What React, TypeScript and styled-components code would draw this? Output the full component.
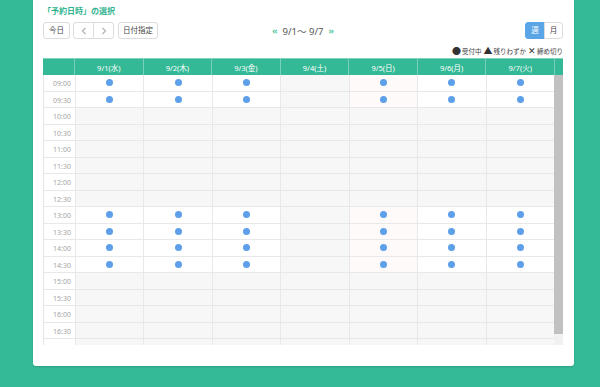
import React from 'react'
import styled, { createGlobalStyle } from 'styled-components'

const GlobalStyle = createGlobalStyle`
  html, body {
    margin: 0;
    padding: 0;
    background: #35ba98;
    font-family: "Noto Sans", "Noto Sans CJK JP", sans-serif;
  }
  * { box-sizing: border-box; }
`

const Page = styled.div`
  width: 600px;
  height: 387px;
  padding-left: 33px;
  overflow: hidden;
`

const Panel = styled.div`
  width: 541px;
  height: 366px;
  background: #fff;
  border-radius: 0 0 3px 3px;
  box-shadow: 0 1px 2px rgba(0, 0, 0, 0.15);
  padding: 5px 11px 0 10px;
  display: flex;
  flex-direction: column;
`

const Title = styled.div`
  font-size: 8px;
  line-height: 12px;
  font-weight: 700;
  color: #2fb48f;
  height: 12px;
`

const Toolbar = styled.div`
  margin-top: 5px;
  height: 17px;
  display: grid;
  grid-template-columns: 1fr auto 1fr;
  align-items: center;
`

const ButtonGroup = styled.div<{ $end?: boolean }>`
  display: flex;
  align-items: center;
  gap: 3px;
  justify-content: ${(p) => (p.$end ? 'flex-end' : 'flex-start')};
`

const Joined = styled.div`
  display: flex;
`

const Btn = styled.button<{ $w: number; $active?: boolean; $pos?: 'left' | 'right' }>`
  width: ${(p) => p.$w}px;
  height: 17px;
  padding: 0;
  border: 1px solid ${(p) => (p.$active ? '#5aa5e6' : '#dcdcdc')};
  background: ${(p) => (p.$active ? '#5aa5e6' : '#fff')};
  color: ${(p) => (p.$active ? '#fff' : '#444')};
  font-family: inherit;
  font-size: 7.5px;
  line-height: 15px;
  display: flex;
  align-items: center;
  justify-content: center;
  border-radius: ${(p) =>
    p.$pos === 'left' ? '3px 0 0 3px' : p.$pos === 'right' ? '0 3px 3px 0' : '3px'};
  & + & {
    margin-left: -1px;
  }
`

const Nav = styled.div`
  display: flex;
  align-items: center;
  gap: 5px;
  font-size: 9.5px;
  color: #555;
`

const NavArrow = styled.span`
  color: #5ccaa8;
  font-size: 9px;
  font-weight: 700;
`

const Legend = styled.div`
  margin-top: 7px;
  height: 9px;
  display: flex;
  justify-content: flex-end;
  align-items: center;
  gap: 2px;
  font-size: 6.5px;
  color: #444;
`

const LegendItem = styled.span`
  display: flex;
  align-items: center;
  gap: 1px;
`

const Mark = styled.span`
  font-size: 9px;
  color: #333;
  line-height: 9px;
`

const cols = '31px repeat(7, 1fr)'

const HeaderRow = styled.div`
  margin-top: 3px;
  display: grid;
  grid-template-columns: ${cols} 9px;
  height: 17px;
  background: #33b996;
  border-top: 1px solid #7fd3bd;
`

const HeadCell = styled.div`
  color: #fff;
  font-size: 7.5px;
  padding-top: 1px;
  display: flex;
  align-items: center;
  justify-content: center;
  border-left: 1px solid rgba(255, 255, 255, 0.35);
  &:first-child {
    border-left: none;
  }
`

const Body = styled.div`
  height: 270px;
  display: flex;
`

const Rows = styled.div`
  flex: 1;
  overflow: hidden;
  border-left: 1px solid #e6e6e6;
`

const ScrollTrack = styled.div`
  width: 9px;
  background: #f1f1f1;
`

const ScrollThumb = styled.div`
  height: 259px;
  background: #c1c1c1;
`

const Row = styled.div`
  display: grid;
  grid-template-columns: ${cols};
  height: 16.5px;
  border-bottom: 1px solid #e8e8e8;
`

const TimeCell = styled.div`
  background: #fff;
  color: #a5a5a5;
  font-size: 7px;
  display: flex;
  align-items: center;
  justify-content: flex-end;
  padding: 2px 4px 0 0;
`

const DayCell = styled.div<{ $bg: string }>`
  background: ${(p) => p.$bg};
  border-left: 1px solid #e8e8e8;
  display: flex;
  align-items: center;
  justify-content: center;
`

const Dot = styled.span`
  width: 7px;
  height: 7px;
  border-radius: 50%;
  background: #5d9fe9;
`

const days = ['9/1(水)', '9/2(木)', '9/3(金)', '9/4(土)', '9/5(日)', '9/6(月)', '9/7(火)']
const times = [
  '09:00', '09:30', '10:00', '10:30', '11:00', '11:30', '12:00', '12:30',
  '13:00', '13:30', '14:00', '14:30', '15:00', '15:30', '16:00', '16:30', '',
]
const openTimes = ['09:00', '09:30', '13:00', '13:30', '14:00', '14:30']

const cellBg = (open: boolean, day: number) => {
  if (!open || day === 3) return '#f7f7f7'
  if (day === 4) return '#fffafa'
  return '#fff'
}

const Chevron = ({ dir }: { dir: 'l' | 'r' }) => (
  <svg width="6" height="8" viewBox="0 0 6 8">
    <path
      d={dir === 'l' ? 'M4.5 1 L1.5 4 L4.5 7' : 'M1.5 1 L4.5 4 L1.5 7'}
      fill="none"
      stroke="#b5b5b5"
      strokeWidth="1.3"
    />
  </svg>
)

export default function App() {
  return (
    <>
      <GlobalStyle />
      <Page>
        <Panel>
          <Title>「予約日時」の選択</Title>
          <Toolbar>
            <ButtonGroup>
              <Btn $w={27}>今日</Btn>
              <Joined>
                <Btn $w={21} $pos="left">
                  <Chevron dir="l" />
                </Btn>
                <Btn $w={21} $pos="right">
                  <Chevron dir="r" />
                </Btn>
              </Joined>
              <Btn $w={40} style={{ marginLeft: 1 }}>日付指定</Btn>
            </ButtonGroup>
            <Nav>
              <NavArrow>«</NavArrow>
              <span>9/1〜 9/7</span>
              <NavArrow>»</NavArrow>
            </Nav>
            <ButtonGroup $end>
              <Joined>
                <Btn $w={20} $active $pos="left">週</Btn>
                <Btn $w={19} $pos="right">月</Btn>
              </Joined>
            </ButtonGroup>
          </Toolbar>
          <Legend>
            <LegendItem><Mark>●</Mark>受付中</LegendItem>
            <LegendItem><Mark>▲</Mark>残りわずか</LegendItem>
            <LegendItem><Mark>✕</Mark>締め切り</LegendItem>
          </Legend>
          <HeaderRow>
            <HeadCell />
            {days.map((d) => (
              <HeadCell key={d}>{d}</HeadCell>
            ))}
            <HeadCell />
          </HeaderRow>
          <Body>
            <Rows>
              {times.map((t, r) => {
                const open = openTimes.includes(t)
                return (
                  <Row key={r}>
                    <TimeCell>{t}</TimeCell>
                    {days.map((d, i) => (
                      <DayCell key={d} $bg={cellBg(open, i)}>
                        {open && i !== 3 && <Dot />}
                      </DayCell>
                    ))}
                  </Row>
                )
              })}
            </Rows>
            <ScrollTrack>
              <ScrollThumb />
            </ScrollTrack>
          </Body>
        </Panel>
      </Page>
    </>
  )
}
